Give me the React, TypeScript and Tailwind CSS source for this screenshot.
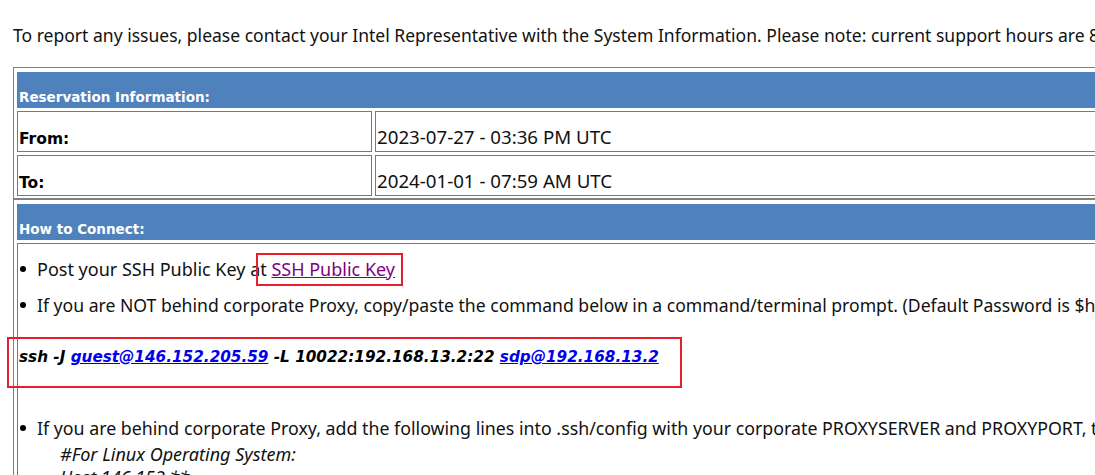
import React from 'react';

const body = { fontFamily: '"Noto Sans", "Open Sans", sans-serif' };
const verdana = { fontFamily: '"DejaVu Sans", Verdana, sans-serif' };

const Bullet: React.FC<{ children: React.ReactNode; className?: string }> = ({ children, className }) => (
  <div className={`flex items-center h-[24px] leading-[24px] whitespace-nowrap ${className ?? ''}`}>
    <span className="ml-[2px] mr-[11px] inline-block w-[6px] h-[6px] rounded-full bg-black shrink-0" />
    <span>{children}</span>
  </div>
);

const Header: React.FC<{ title: string }> = ({ title }) => (
  <div className="h-[36px] bg-[#4f81bd] flex items-end pb-[3px] pl-[2px]">
    <span className="text-white font-bold text-[13.5px] leading-[16px]" style={verdana}>{title}</span>
  </div>
);

const InfoRow: React.FC<{ label: string; value: string }> = ({ label, value }) => (
  <div className="flex gap-[3px]">
    <div className="w-[355px] h-[41px] border border-[#4f81bd] flex items-end pb-[3px] pl-[1px]">
      <span className="font-bold text-[15.5px] leading-[18px] text-black" style={verdana}>{label}</span>
    </div>
    <div className="flex-1 h-[41px] border border-[#4f81bd] flex items-end pb-[3px] pl-[1px]">
      <span className="text-[18.7px] leading-[22px] text-[#111]" style={body}>{value}</span>
    </div>
  </div>
);

export default function App() {
  return (
    <div className="relative w-[1095px] h-[475px] overflow-hidden bg-white text-[#111]" style={body}>
      {/* intro */}
      <div className="h-[67px] pl-[13px] pt-[23px] text-[17.55px] leading-[24px] whitespace-nowrap">
        To report any issues, please contact your Intel Representative with the System Information. Please note: current support hours are 8:00 AM - 5:00 PM PST
      </div>

      {/* outer table */}
      <div className="ml-[13px] w-[1200px] border-l border-[#808080]">
        <div className="border-t border-[#808080] pl-[3px] pt-[4px] pb-[2px] flex flex-col gap-[3px]">
          <Header title="Reservation Information:" />
          <InfoRow label="From:" value="2023-07-27 - 03:36 PM UTC" />
          <InfoRow label="To:" value="2024-01-01 - 07:59 AM UTC" />
        </div>

        <div className="border-t-2 border-[#808080] pl-[3px] pt-[4px] flex flex-col gap-[3px]">
          <Header title="How to Connect:" />
          <div className="border-l border-t border-[#4f81bd] h-[300px]">
            <Bullet className="mt-[13px] text-[18px]">
              Post your SSH Public Key at{' '}
              <a href="#" className="text-[#800080] underline">SSH Public Key</a>
            </Bullet>
            <Bullet className="mt-[12px] text-[17.6px]">
              If you are NOT behind corporate Proxy, copy/paste the command below in a command/terminal prompt. (Default Password is $hrp@123)
            </Bullet>
            <div className="mt-[28px] pl-[1px] h-[24px] leading-[24px] whitespace-nowrap font-bold italic text-[15.25px] text-black" style={verdana}>
              ssh -J <a href="#" className="text-[#0000ee] underline">guest@146.152.205.59</a> -L 10022:192.168.13.2:22{' '}
              <a href="#" className="text-[#0000ee] underline">sdp@192.168.13.2</a>
            </div>
            <Bullet className="mt-[47px] text-[17.8px]">
              If you are behind corporate Proxy, add the following lines into .ssh/config with your corporate PROXYSERVER and PROXYPORT, then use the command below
            </Bullet>
            <div className="mt-[2px] pl-[42px] leading-[24px] text-[18px] italic whitespace-nowrap">#For Linux Operating System:</div>
            <div className="pl-[42px] leading-[22px] text-[18px] italic whitespace-nowrap">Host 146.152.**</div>
          </div>
        </div>
      </div>

      {/* annotation boxes */}
      <div className="absolute left-[256px] top-[253px] w-[147px] h-[33px] border-2 border-[#e3202b]" />
      <div className="absolute left-[7px] top-[337px] w-[675px] h-[51px] border-2 border-[#e3202b]" />
    </div>
  );
}
